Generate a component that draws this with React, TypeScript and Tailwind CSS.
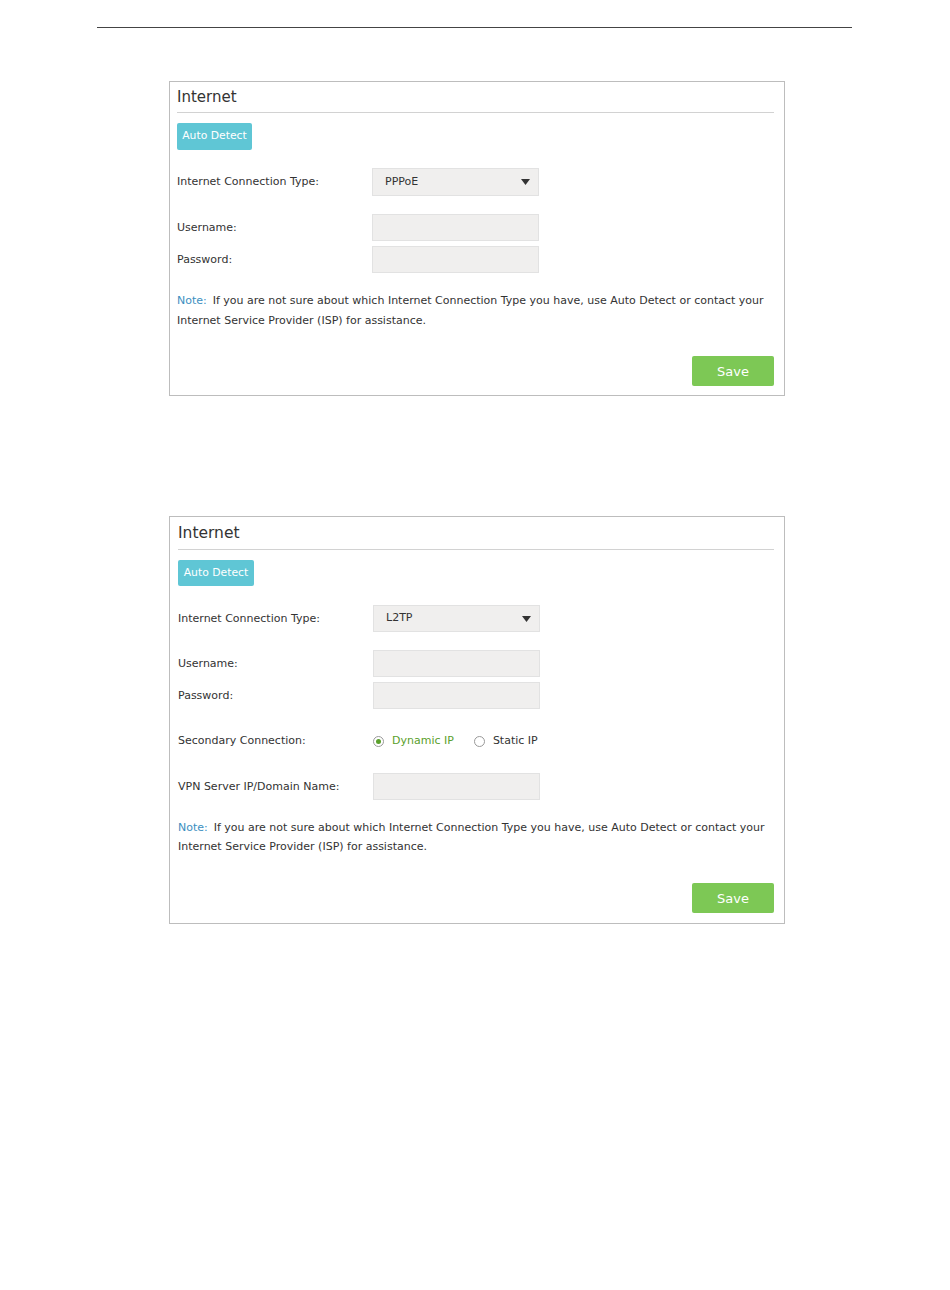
import React from "react";

const font = { fontFamily: '"DejaVu Sans", "Liberation Sans", sans-serif' };

function Arrow() {
  return (
    <svg width="9" height="6" viewBox="0 0 9 6" className="mr-[8px]">
      <path d="M0 0 L9 0 L4.5 6 Z" fill="#333" />
    </svg>
  );
}

function Select({ value }: { value: string }) {
  return (
    <div className="flex h-full w-[167px] items-center justify-between border border-[#e2e2e2] bg-[#f0efee] pl-[12px] text-[11px] text-[#333]">
      <span>{value}</span>
      <Arrow />
    </div>
  );
}

function Input() {
  return <div className="h-full w-[167px] border border-[#e2e2e2] bg-[#f0efee]" />;
}

function Row({ label, h, mt, children }: { label: string; h: string; mt: string; children: React.ReactNode }) {
  return (
    <div className={`flex items-center ${h} ${mt}`}>
      <div className="w-[195px] pt-[1px] text-[11px] text-[#333]">{label}</div>
      <div className="flex h-full items-center">{children}</div>
    </div>
  );
}

function Note({ mt, lh }: { mt: string; lh: string }) {
  return (
    <p className={`${mt} ${lh} pr-[8px] text-[11px] text-[#333]`}>
      <span className="mr-[6px] text-[#3d8fbf]">Note:</span>
      <span>
        If you are not sure about which Internet Connection Type you have, use Auto Detect or contact your Internet Service Provider (ISP) for assistance.
      </span>
    </p>
  );
}

function Radio({ on, label }: { on?: boolean; label: string }) {
  return (
    <div className="flex items-center gap-[8px]">
      <span className="flex h-[11px] w-[11px] items-center justify-center rounded-full border border-[#999] bg-white">
        {on && <span className="h-[5px] w-[5px] rounded-full bg-[#5aa02c]" />}
      </span>
      <span className={on ? "text-[#5aa02c]" : "text-[#333]"}>{label}</span>
    </div>
  );
}

export default function App() {
  return (
    <div className="min-h-[1290px] w-[950px] bg-white" style={font}>
      <div className="h-[27px]" />
      <div className="ml-[97px] w-[755px] border-t border-[#444]" />

      {/* PPPoE panel */}
      <div className="ml-[169px] mt-[53px] w-[616px] border border-[#bdbdbd] pb-[9px] pl-[7px] pr-[10px]">
        <div className="h-[31px] border-b border-[#d2d2d2] text-[15px] leading-[31px] text-[#333]">Internet</div>
        <div className="mt-[10px] flex h-[27px] w-[75px] items-center justify-center rounded-[2px] bg-[#5fc6d5] text-[10.8px] text-white">
          Auto Detect
        </div>
        <Row label="Internet Connection Type:" h="h-[28px]" mt="mt-[18px]">
          <Select value="PPPoE" />
        </Row>
        <Row label="Username:" h="h-[27px]" mt="mt-[18px]">
          <Input />
        </Row>
        <Row label="Password:" h="h-[27px]" mt="mt-[5px]">
          <Input />
        </Row>
        <Note mt="mt-[18px]" lh="leading-[20px]" />
        <div className="mt-[25px] flex justify-end">
          <div className="flex h-[30px] w-[82px] items-center justify-center rounded-[2px] bg-[#7dc855] pt-[1px] text-[13px] text-white">
            Save
          </div>
        </div>
      </div>

      {/* L2TP panel */}
      <div className="ml-[169px] mt-[120px] w-[616px] border border-[#bdbdbd] pb-[10px] pl-[8px] pr-[10px]">
        <div className="h-[33px] border-b border-[#d2d2d2] text-[15.5px] leading-[33px] text-[#333]">Internet</div>
        <div className="mt-[10px] flex h-[26px] w-[76px] items-center justify-center rounded-[2px] bg-[#5fc6d5] text-[10.8px] text-white">
          Auto Detect
        </div>
        <Row label="Internet Connection Type:" h="h-[27px]" mt="mt-[19px]">
          <Select value="L2TP" />
        </Row>
        <Row label="Username:" h="h-[27px]" mt="mt-[18px]">
          <Input />
        </Row>
        <Row label="Password:" h="h-[27px]" mt="mt-[5px]">
          <Input />
        </Row>
        <Row label="Secondary Connection:" h="h-[20px]" mt="mt-[22px]">
          <div className="flex items-center gap-[20px] text-[11px]">
            <Radio on label="Dynamic IP" />
            <Radio label="Static IP" />
          </div>
        </Row>
        <Row label="VPN Server IP/Domain Name:" h="h-[27px]" mt="mt-[22px]">
          <Input />
        </Row>
        <Note mt="mt-[18px]" lh="leading-[19px]" />
        <div className="mt-[27px] flex justify-end">
          <div className="flex h-[30px] w-[82px] items-center justify-center rounded-[2px] bg-[#7dc855] pt-[1px] text-[13px] text-white">
            Save
          </div>
        </div>
      </div>
    </div>
  );
}
